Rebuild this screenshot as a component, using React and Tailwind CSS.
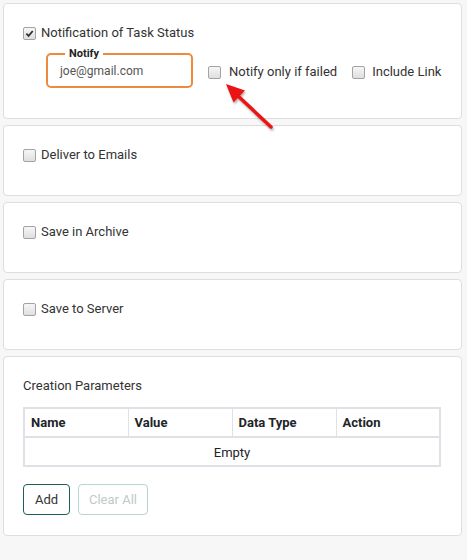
import React, { useState } from "react";

const Checkbox = ({ checked, onChange, label, gap = "gap-[5px]" }) => (
  <label className={`flex items-center h-[20px] ${gap} cursor-pointer select-none whitespace-nowrap`}>
    <span
      onClick={onChange}
      className="w-[13px] h-[13px] shrink-0 rounded-[2px] border border-[#a3a3a3] bg-gradient-to-b from-[#f6f6f6] to-[#dfdfdf] flex items-center justify-center"
    >
      {checked && (
        <svg width="9" height="9" viewBox="0 0 10 10">
          <path d="M1.5 5.2 L4 7.6 L8.6 2.2" fill="none" stroke="#333" strokeWidth="2" />
        </svg>
      )}
    </span>
    <span className="text-[13px] text-[#333]">{label}</span>
  </label>
);

const Card = ({ children }) => (
  <div className="bg-white border border-[#dedede] rounded-[4px] px-[19px] pt-[19px] pb-[30px]">
    {children}
  </div>
);

const App = () => {
  const [notify, setNotify] = useState(true);
  const [onlyFailed, setOnlyFailed] = useState(false);
  const [includeLink, setIncludeLink] = useState(false);
  const [deliver, setDeliver] = useState(false);
  const [archive, setArchive] = useState(false);
  const [server, setServer] = useState(false);

  return (
    <div
      className="relative min-h-[560px] bg-[#f7f7f7] pt-[3px] pl-[3px] pr-[5px] flex flex-col gap-[6px]"
      style={{ fontFamily: "Roboto, 'Liberation Sans', sans-serif" }}
    >
      {/* Task status notification */}
      <Card>
        <Checkbox checked={notify} onChange={() => setNotify(!notify)} label="Notification of Task Status" />
        <div className="flex items-start mt-[4px]">
          <fieldset className="ml-[23px] w-[147px] shrink-0 border-2 border-[#ef8a3d] rounded-[5px] px-[12px] pb-[5px]">
            <legend className="ml-[5px] px-[4px] text-[11px] leading-[14px] font-bold text-[#222]">Notify</legend>
            <div className="h-[20px] flex items-center text-[12px] text-[#555]">joe@gmail.com</div>
          </fieldset>
          <div className="flex items-center gap-[15px] ml-[15px] pt-[15px]">
            <Checkbox
              checked={onlyFailed}
              onChange={() => setOnlyFailed(!onlyFailed)}
              label="Notify only if failed"
              gap="gap-[8px]"
            />
            <Checkbox
              checked={includeLink}
              onChange={() => setIncludeLink(!includeLink)}
              label="Include Link"
              gap="gap-[7px]"
            />
          </div>
        </div>
      </Card>

      <Card>
        <Checkbox checked={deliver} onChange={() => setDeliver(!deliver)} label="Deliver to Emails" />
      </Card>

      <Card>
        <Checkbox checked={archive} onChange={() => setArchive(!archive)} label="Save in Archive" />
      </Card>

      <Card>
        <Checkbox checked={server} onChange={() => setServer(!server)} label="Save to Server" />
      </Card>

      {/* Parameters table */}
      <div className="bg-white border border-[#dedede] rounded-[4px] px-[19px] pt-[19px] pb-[20px]">
        <div className="h-[20px] flex items-center text-[13px] text-[#333]">Creation Parameters</div>
        <table className="mt-[11px] w-[418px] table-fixed border-collapse border-2 border-[#dee2e6] text-[13px] text-[#212529]">
          <thead>
            <tr className="h-[29px] border-b-2 border-[#dee2e6]">
              <th className="text-left font-bold px-[6px] border-r border-[#dee2e6]">Name</th>
              <th className="text-left font-bold px-[6px] border-r border-[#dee2e6]">Value</th>
              <th className="text-left font-bold px-[6px] border-r border-[#dee2e6]">Data Type</th>
              <th className="text-left font-bold px-[6px]">Action</th>
            </tr>
          </thead>
          <tbody>
            <tr className="h-[29px]">
              <td colSpan={4} className="text-center pt-[2px]">Empty</td>
            </tr>
          </tbody>
        </table>
        <div className="flex gap-[8px] mt-[17px]">
          <button className="h-[31px] w-[47px] border border-[#1f5f58] rounded-[4px] text-[13px] text-[#333] bg-white">
            Add
          </button>
          <button disabled className="h-[31px] w-[70px] border border-[#b7d6d2] rounded-[4px] text-[13px] text-[#bfc9c8] bg-white">
            Clear All
          </button>
        </div>
      </div>

      {/* Pointer arrow */}
      <svg
        className="absolute left-0 top-0 pointer-events-none drop-shadow-[1px_2px_1px_rgba(0,0,0,0.3)]"
        width="467"
        height="140"
      >
        <line x1="271" y1="127" x2="237" y2="95" stroke="#ee1313" strokeWidth="3.5" strokeLinecap="round" />
        <polygon points="226,84 245,90.5 233.5,102.5" fill="#ee1313" />
      </svg>
    </div>
  );
};

export default App;
